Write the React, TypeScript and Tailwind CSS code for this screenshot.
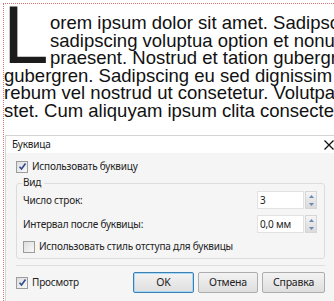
const docFont = { fontFamily: '"Liberation Sans", Arial, sans-serif' };
const uiFont = { fontFamily: '"Noto Sans", "Open Sans", sans-serif' };

function CheckBox({ checked }: { checked?: boolean }) {
  return (
    <span className="w-[12px] h-[12px] border border-[#9c9c9c] bg-gradient-to-br from-[#dedede] to-[#f8f8f8] flex items-center justify-center shrink-0">
      {checked && (
        <svg width="9" height="9" viewBox="0 0 9 9">
          <path d="M1.5 4.8 L3.5 7 L7.5 1.5" fill="none" stroke="#2d4c8f" strokeWidth="1.6" />
        </svg>
      )}
    </span>
  );
}

function Spin({ value }: { value: string }) {
  return (
    <div className="flex h-[18px] w-[60px]">
      <div className="flex-1 border border-[#e2e2e2] bg-white pl-[2px] text-[10px] leading-[16px] text-[#222]">{value}</div>
      <div className="w-[12px] flex flex-col ml-[1px] border border-[#d6d6d6]">
        <div className="flex-1 bg-gradient-to-b from-[#f6f6f6] to-[#e6e6e6] flex items-center justify-center">
          <svg width="5" height="3" viewBox="0 0 5 3">
            <path d="M0 3 L2.5 0 L5 3 Z" fill="#6b86b8" />
          </svg>
        </div>
        <div className="flex-1 bg-gradient-to-b from-[#e6e6e6] to-[#dadada] flex items-center justify-center">
          <svg width="5" height="3" viewBox="0 0 5 3">
            <path d="M0 0 L2.5 3 L5 0 Z" fill="#6b86b8" />
          </svg>
        </div>
      </div>
    </div>
  );
}

function Btn({ label, focus, w }: { label: string; focus?: boolean; w: string }) {
  return (
    <button
      className={
        w +
        " h-[21px] text-[10.5px] text-[#222] bg-gradient-to-b from-[#f3f3f3] to-[#dedede] rounded-[2px] " +
        (focus ? "border border-[#3c7fb1] shadow-[inset_0_0_0_1px_#a8d8f8]" : "border border-[#adadad]")
      }
    >
      {label}
    </button>
  );
}

export default function App() {
  return (
    <div className="relative w-[334px] h-[301px] overflow-hidden bg-white">
      <div
        className="ml-[3px] mt-[3px] h-[400px] pt-[10px] border-l border-t border-dotted border-[#e07070] text-[18.5px] leading-[17.6px] text-[#111] whitespace-nowrap"
        style={docFont}
      >
        <div className="flex">
          <div className="w-[46px] h-[52px] shrink-0 relative">
            <span className="absolute left-[-1px] top-[-20px] text-[82px] leading-[82px] text-[#1c1c1c]">L</span>
          </div>
          <div>
            <div>orem ipsum dolor sit amet. Sadipscing</div>
            <div>sadipscing voluptua option et nonumy</div>
            <div>praesent. Nostrud et tation gubergren</div>
          </div>
        </div>
        <div>
          <div>gubergren. Sadipscing eu sed dignissim</div>
          <div>rebum vel nostrud ut consetetur. Volutpat</div>
          <div>stet. Cum aliquyam ipsum clita consectetur</div>
        </div>
      </div>

      <div
        className="absolute left-[5px] top-[135px] w-[340px] h-[170px] bg-[#f5f5f5] border-t border-l border-[#d4d4d4] text-[10px] tracking-[-0.2px] text-[#222]"
        style={uiFont}
      >
        <div className="h-[17px] bg-white flex items-center justify-between pl-[6px] pr-[11px]">
          <span>Буквица</span>
          <svg width="10" height="10" viewBox="0 0 10 10">
            <path d="M0.5 0.5 L9.5 9.5 M9.5 0.5 L0.5 9.5" stroke="#111" strokeWidth="1.3" />
          </svg>
        </div>

        <div className="pl-[10px] pt-[7px] w-[319px]">
          <label className="flex items-center gap-[4px] h-[13px]">
            <CheckBox checked />
            <span>Использовать буквицу</span>
          </label>

          <div className="relative mt-[10px] h-[76px] border border-[#dcdcdc] rounded-[3px]">
            <span className="absolute left-[5px] top-[-9px] bg-[#f5f5f5] pr-[3px] pl-[1px]">Вид</span>
            <div className="pl-[6px] pt-[7px] pr-[7px]">
              <div className="flex items-center justify-between">
                <span>Число строк:</span>
                <Spin value="3" />
              </div>
              <div className="flex items-center justify-between mt-[6px]">
                <span>Интервал после буквицы:</span>
                <Spin value="0,0 мм" />
              </div>
              <label className="flex items-center gap-[4px] mt-[7px] h-[13px]">
                <CheckBox />
                <span>Использовать стиль отступа для буквицы</span>
              </label>
            </div>
          </div>

          <div className="mt-[6px] border-t border-[#dedede]" />

          <div className="flex items-center justify-between mt-[6px]">
            <label className="flex items-center gap-[4px]">
              <CheckBox checked />
              <span>Просмотр</span>
            </label>
            <div className="flex gap-[4px]">
              <Btn label="OK" focus w="w-[61px]" />
              <Btn label="Отмена" w="w-[60px]" />
              <Btn label="Справка" w="w-[63px]" />
            </div>
          </div>
        </div>
      </div>
    </div>
  );
}
